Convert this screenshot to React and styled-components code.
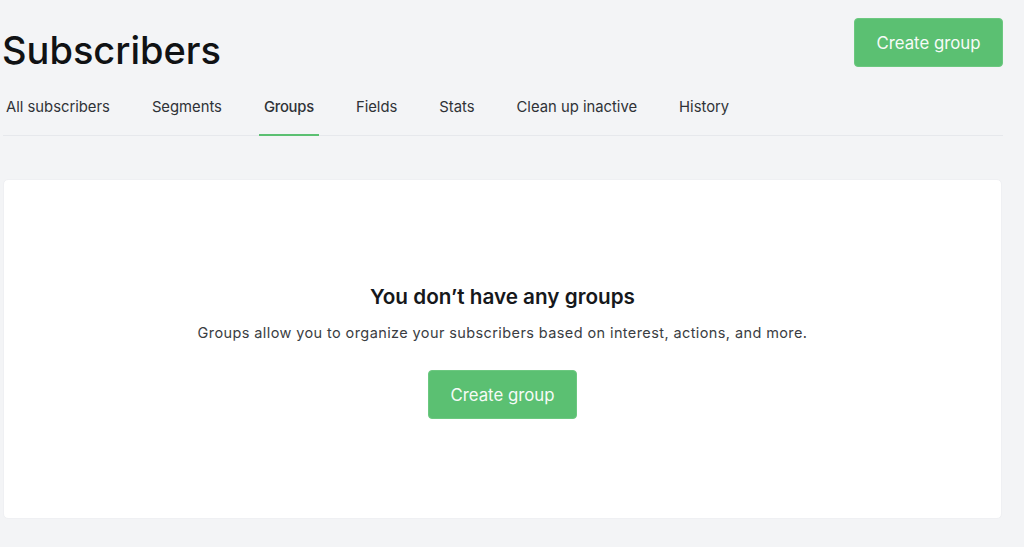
import styled, { createGlobalStyle } from "styled-components";

const tabs = [
  "All subscribers",
  "Segments",
  "Groups",
  "Fields",
  "Stats",
  "Clean up inactive",
  "History",
];

const GlobalStyle = createGlobalStyle`
  html, body {
    margin: 0;
    padding: 0;
    background: #f3f4f6;
    overflow: hidden;
  }
  * {
    box-sizing: border-box;
  }
  body {
    font-family: Inter, "Liberation Sans", sans-serif;
    color: #111;
  }
`;

const Page = styled.div`
  width: 1024px;
  height: 547px;
  padding: 18px 21px 0 3px;
`;

const Header = styled.div`
  display: flex;
  justify-content: space-between;
  align-items: flex-start;
  height: 65px;
`;

const Title = styled.h1`
  margin: 9px 0 0 -1px;
  font-size: 38px;
  line-height: 46px;
  font-weight: 500;
  color: #101214;
`;

const Button = styled.button`
  height: 49px;
  width: 149px;
  border: 1px solid #6cc880;
  border-radius: 4px;
  background: #5bc072;
  color: #f6fbf7;
  font-family: inherit;
  font-size: 16.8px;
  font-weight: 400;
`;

const TabBar = styled.nav`
  display: flex;
  gap: 32px;
  height: 53px;
  border-bottom: 1px solid #e6e8ec;
`;

const Tab = styled.a`
  height: 53px;
  padding: 15px 5px 0;
  margin-left: ${(p) => (p.$first ? "-2px" : "0")};
  font-size: 14.8px;
  line-height: 18px;
  font-weight: ${(p) => (p.$active ? 500 : 400)};
  letter-spacing: ${(p) => (p.$active ? "-0.25px" : "0")};
  color: #2f3237;
  border-bottom: 2px solid ${(p) => (p.$active ? "#5bc072" : "transparent")};
`;

const Card = styled.section`
  margin: 43px 1px 0 0;
  height: 340px;
  background: #fff;
  border: 1px solid #eff0f3;
  border-radius: 5px;
  display: flex;
  flex-direction: column;
  align-items: center;
  padding-top: 103px;
`;

const CardTitle = styled.h2`
  margin: 0;
  font-size: 20.7px;
  line-height: 28px;
  font-weight: 600;
  color: #16181b;
`;

const CardText = styled.p`
  margin: 11px 0 26px;
  font-size: 14.5px;
  line-height: 22px;
  letter-spacing: 0.4px;
  color: #3a3d42;
`;

export default function App() {
  return (
    <Page>
      <GlobalStyle />
      <Header>
        <Title>Subscribers</Title>
        <Button>Create group</Button>
      </Header>
      <TabBar>
        {tabs.map((t, i) => (
          <Tab key={t} $first={i === 0} $active={t === "Groups"}>
            {t}
          </Tab>
        ))}
      </TabBar>
      <Card>
        <CardTitle>You don’t have any groups</CardTitle>
        <CardText>
          Groups allow you to organize your subscribers based on interest,
          actions, and more.
        </CardText>
        <Button>Create group</Button>
      </Card>
    </Page>
  );
}
